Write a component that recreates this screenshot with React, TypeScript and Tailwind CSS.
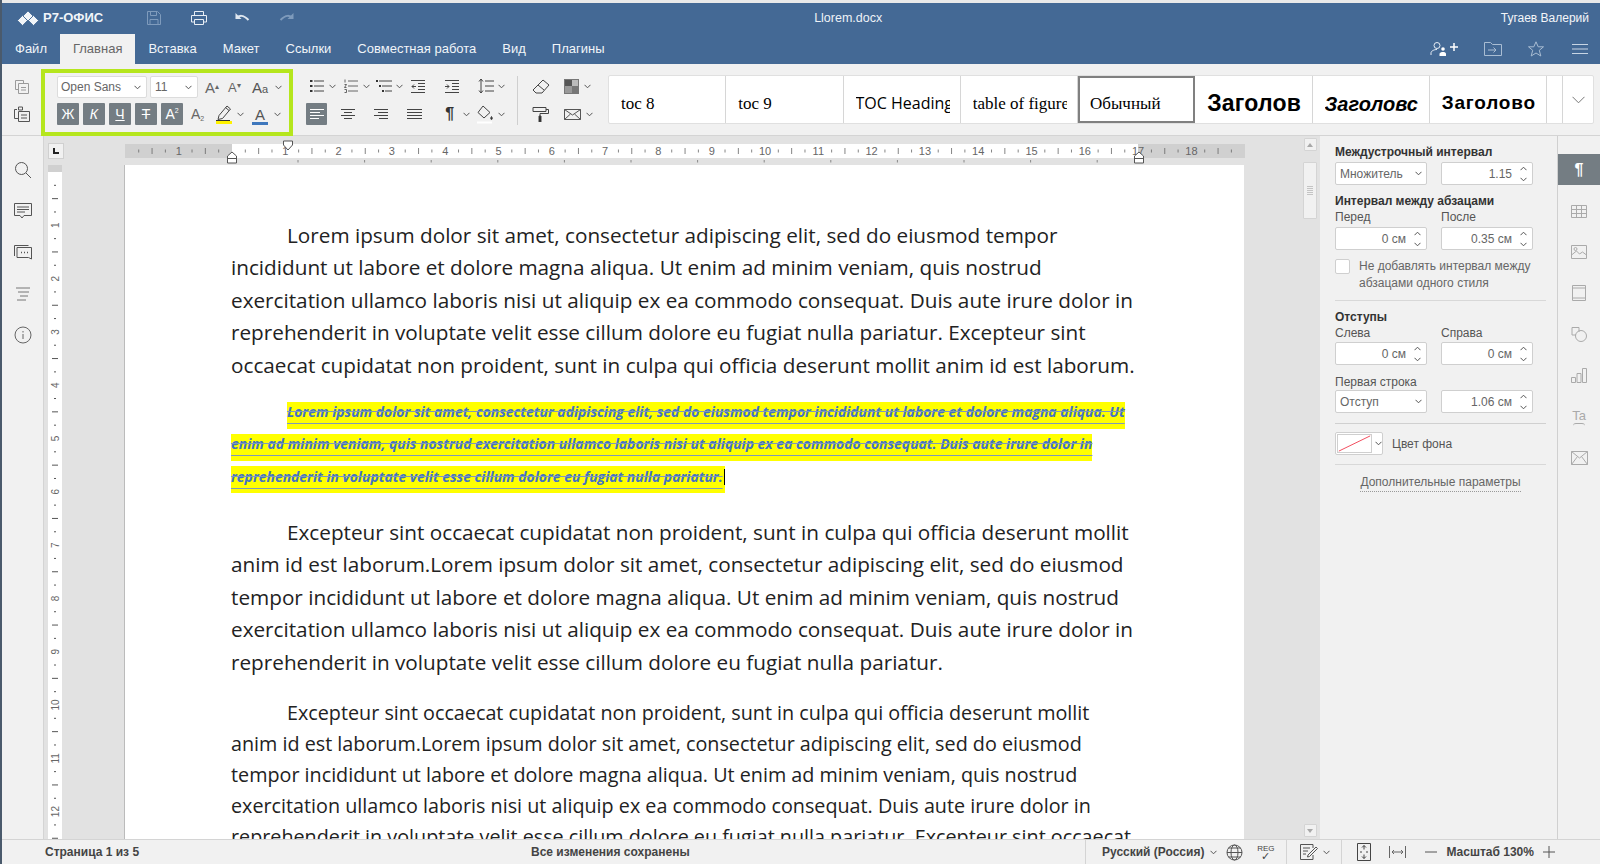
import type { ReactNode } from "react";

const sans = "font-['Liberation_Sans',Arial,sans-serif]";

function Chev({ className = "", color = "#555" }: { className?: string; color?: string }) {
  return (
    <svg width="7" height="5" viewBox="0 0 7 5" className={`shrink-0 ${className}`} fill="none" stroke={color} strokeWidth="1">
      <path d="M.5 .8 3.5 3.8 6.5 .8" />
    </svg>
  );
}

function Ico({ w = 16, h = 16, className = "", stroke = "#444", children }: { w?: number; h?: number; className?: string; stroke?: string; children: ReactNode }) {
  return (
    <svg width={w} height={h} viewBox={`0 0 ${w} ${h}`} className={`shrink-0 ${className}`} fill="none" stroke={stroke} strokeWidth="1">
      {children}
    </svg>
  );
}

function Hdr({ label, className = "" }: { label: string; className?: string }) {
  return <div className={`text-[12px] font-bold leading-[14px] text-[#333] ${className}`}>{label}</div>;
}

function Lbl({ label, className = "" }: { label: string; className?: string }) {
  return <div className={`text-[12px] leading-[14px] text-[#555] ${className}`}>{label}</div>;
}

function Select({ value }: { value: string }) {
  return (
    <div className="flex h-[23px] w-[92px] items-center justify-between rounded-[2px] border border-[#cfcfcf] bg-white pl-[4px] pr-[4px] text-[12px] text-[#666]">
      {value}
      <Chev />
    </div>
  );
}

function Spin({ value }: { value: string }) {
  return (
    <div className="flex h-[23px] w-[92px] items-center justify-end rounded-[2px] border border-[#cfcfcf] bg-white pr-[5px] text-[12px] text-[#666]">
      {value}
      <span className="ml-[8px] flex flex-col gap-[6px]">
        <Chev className="rotate-180" />
        <Chev />
      </span>
    </div>
  );
}

function Ruler() {
  const cm = 53.3;
  const zero = 107;
  const ticks: number[] = [];
  for (let i = -8; i < 80; i++) ticks.push(zero + i * (cm / 4));
  const nums = Array.from({ length: 18 }, (_, i) => i + 1);
  const tabs = Array.from({ length: 13 }, (_, i) => 173 + i * 66.6);
  return (
    <svg width="1120" height="22" viewBox="0 0 1120 22" className="shrink-0 overflow-visible">
      <rect x="0" y="0" width="1120" height="14" fill="#d0d0d0" />
      <rect x="107" y="0" width="906" height="14" fill="#fff" />
      {ticks.map((x, i) =>
        i % 4 === 0 || x < 4 || x > 1116 ? null : <line key={i} x1={x} x2={x} y1={i % 4 === 2 ? 4 : 5.5} y2={i % 4 === 2 ? 10 : 8.5} stroke="#666" strokeWidth=".8" />
      )}
      <text x={zero - cm} y="11" textAnchor="middle" fontSize="11" fill="#666" fontFamily="Liberation Sans">1</text>
      {nums.map((n) => (
        <text key={n} x={zero + n * cm} y="11" textAnchor="middle" fontSize="11" fill="#666" fontFamily="Liberation Sans">{n}</text>
      ))}
      {tabs.map((x) => (
        <line key={x} x1={x} x2={x} y1="16" y2="18.5" stroke="#888" />
      ))}
      <path d="M102.5 19V12l4.500-4 4.500 4v7zM102.5 14.500h9" fill="#fff" stroke="#555" />
      <path d="M158.5 -3h9v4l-4.500 5-4.500-5z" fill="#fff" stroke="#555" />
      <path d="M1009.5 19V12l4.500-4 4.500 4v7zM1009.5 14.500h9" fill="#fff" stroke="#555" />
    </svg>
  );
}

function VRuler() {
  const cm = 53.3;
  const rows = Array.from({ length: 52 }, (_, i) => 7 + i * (cm / 4));
  return (
    <svg width="14" height="674" viewBox="0 0 14 674" className="shrink-0">
      <rect width="14" height="674" fill="#fff" />
      <rect width="14" height="7" fill="#d0d0d0" />
      {rows.map((y, i) =>
        i === 0 || i % 4 === 0 ? null : <line key={i} y1={y} y2={y} x1={i % 4 === 2 ? 4 : 6} x2={i % 4 === 2 ? 10 : 8} stroke="#555" strokeWidth="1" />
      )}
      {Array.from({ length: 12 }, (_, i) => i + 1).map((n) => (
        <text key={n} x="0" y="0" transform={`translate(11 ${7 + n * cm}) rotate(-90)`} textAnchor="middle" fontSize="10" fill="#666" fontFamily="Liberation Sans">{n}</text>
      ))}
    </svg>
  );
}

const para1 = [
  "Lorem ipsum dolor sit amet, consectetur adipiscing elit, sed do eiusmod tempor",
  "incididunt ut labore et dolore magna aliqua. Ut enim ad minim veniam, quis nostrud",
  "exercitation ullamco laboris nisi ut aliquip ex ea commodo consequat. Duis aute irure dolor in",
  "reprehenderit in voluptate velit esse cillum dolore eu fugiat nulla pariatur. Excepteur sint",
  "occaecat cupidatat non proident, sunt in culpa qui officia deserunt mollit anim id est laborum.",
];
const para3 = [
  "Excepteur sint occaecat cupidatat non proident, sunt in culpa qui officia deserunt mollit",
  "anim id est laborum.Lorem ipsum dolor sit amet, consectetur adipiscing elit, sed do eiusmod",
  "tempor incididunt ut labore et dolore magna aliqua. Ut enim ad minim veniam, quis nostrud",
  "exercitation ullamco laboris nisi ut aliquip ex ea commodo consequat. Duis aute irure dolor in",
  "reprehenderit in voluptate velit esse cillum dolore eu fugiat nulla pariatur.",
];
const para4 = [
  "Excepteur sint occaecat cupidatat non proident, sunt in culpa qui officia deserunt mollit",
  "anim id est laborum.Lorem ipsum dolor sit amet, consectetur adipiscing elit, sed do eiusmod",
  "tempor incididunt ut labore et dolore magna aliqua. Ut enim ad minim veniam, quis nostrud",
  "exercitation ullamco laboris nisi ut aliquip ex ea commodo consequat. Duis aute irure dolor in",
  "reprehenderit in voluptate velit esse cillum dolore eu fugiat nulla pariatur. Excepteur sint occaecat",
];
const marked = [
  "Lorem ipsum dolor sit amet, consectetur adipiscing elit, sed do eiusmod tempor incididunt ut labore et dolore magna aliqua. Ut",
  "enim ad minim veniam, quis nostrud exercitation ullamco laboris nisi ut aliquip ex ea commodo consequat. Duis aute irure dolor in",
  "reprehenderit in voluptate velit esse cillum dolore eu fugiat nulla pariatur.",
];

function Para({ lines, className = "" }: { lines: string[]; className?: string }) {
  return (
    <div className={`text-[#222] ${className}`}>
      {lines.map((l, i) => (
        <div key={i} className={`whitespace-nowrap ${i === 0 ? "pl-[56px]" : ""}`}>{l}</div>
      ))}
    </div>
  );
}

function StyleCell({ children, selected }: { children: ReactNode; selected?: boolean }) {
  return (
    <div className={`flex h-full w-[117.25px] shrink-0 items-center whitespace-nowrap pt-[8px] text-black ${selected ? "border-2 border-[#808080] pl-[10px]" : "border-r border-[#d6d6d6] pl-[12px]"}`}>
      <div className="w-[94px] overflow-hidden">{children}</div>
    </div>
  );
}

const tabs = ["Файл", "Главная", "Вставка", "Макет", "Ссылки", "Совместная работа", "Вид", "Плагины"];

export default function App() {
  return (
    <div className={`flex h-[864px] w-[1600px] flex-col overflow-hidden border-l-2 border-[#4a5a6c] bg-[#f1f1f1] ${sans}`}>
      <div className="h-[3px] shrink-0 bg-[#e9e9e9]" />
      {/* шапка */}
      <header className="h-[61px] shrink-0 bg-[#446995] text-white">
        <div className="flex h-[30px] items-center">
          <svg width="22" height="15" viewBox="0 0 22 15" className="ml-[15px]" fill="#f2f5f8" stroke="#446995" strokeWidth=".8">
            <path d="M5.500 4.500 10.500 9.500 5.500 14.500 .5 9.500zM16.500 4.500 21.500 9.500 16.500 14.500 11.500 9.500zM11 0 16 5 11 10 6 5z" />
          </svg>
          <span className="ml-[4px] text-[13px] font-bold text-[#f1f5f9]">Р7-ОФИС</span>
          <Ico className="ml-[43px]" stroke="#7f9bbc">
            <path d="M1.500 1.500h10l3 3v10h-13zM4.500 1.500v4h6v-4M4 14.500v-5h8v5" />
          </Ico>
          <Ico w={18} className="ml-[28px]" stroke="#e8eef5">
            <path d="M4.500 5V1.500h9V5M4.500 12h-3V5.500h15V12h-3M4.500 9.500h9v5h-9z" />
          </Ico>
          <Ico className="ml-[26px]" stroke="#dfe7f0">
            <path d="M2.500 8.500C5 5 9 4.500 14.500 10" strokeWidth="2" />
            <path d="M1.500 3v6h6z" fill="#dfe7f0" stroke="none" />
          </Ico>
          <Ico className="ml-[29px]" stroke="#7f9bbc">
            <path d="M13.500 8.500C11 5 7 4.500 1.500 10" strokeWidth="2" />
            <path d="M14.500 3v6h-6z" fill="#7f9bbc" stroke="none" />
          </Ico>
          <span className="ml-[508px] w-[90px] text-center text-[12.5px] text-[#eef2f7]">Llorem.docx</span>
          <span className="ml-auto pr-[11px] text-[12px] text-[#f4f6f9]">Тугаев Валерий</span>
        </div>
        <div className="flex h-[31px] items-end">
          {tabs.map((t) => (
            <div key={t} className={`flex h-[30px] items-center px-[13px] text-[13px] ${t === "Главная" ? "bg-[#f1f1f1] text-[#666]" : "text-[#f1f5f9]"}`}>
              {t}
            </div>
          ))}
          <div className="ml-auto flex h-[31px] items-center pr-[12px]">
            <Ico w={28} h={16} stroke="#e6edf5">
              <circle cx="7" cy="4.500" r="3" />
              <path d="M1 14v-2c0-2 3-3.500 6-3.500" />
              <circle cx="13" cy="8" r="1.800" fill="#fff" stroke="none" />
              <path d="M9.500 15v-2c0-1.500 2-2 3.500-2s3 .5 3 2v2z" fill="#fff" stroke="none" />
              <path d="M20 6h8M24 2v8" stroke="#fff" strokeWidth="1.500" />
            </Ico>
            <Ico w={18} className="ml-[26px]" stroke="#a9bdd3">
              <path d="M.5 14.500V1.500h6l2 2h9v11zM4 9h8M9.500 6.500 12 9l-2.500 2.500" />
            </Ico>
            <Ico w={16} className="ml-[26px]" stroke="#a9bdd3">
              <path d="m8 .8 2.200 5h5.300l-4.200 3.500 1.500 5.700L8 12l-4.800 3 1.500-5.700L.5 5.800h5.300z" />
            </Ico>
            <Ico w={16} h={12} className="ml-[28px]" stroke="#c8d5e4">
              <path d="M0 1.500h16M0 6h16M0 10.500h16" />
            </Ico>
          </div>
        </div>
      </header>

      {/* панель инструментов */}
      <div className="relative z-10 flex h-[72px] shrink-0 items-start border-b border-[#d4d4d4] bg-[#f1f1f1]">
        <div className="flex w-[39px] shrink-0 flex-col items-center gap-[11px] pt-[15px]">
          <Ico stroke="#9a9a9a"><path d="M1.500 1.500h8v3M1.500 1.500v9h3M4.500 4.500h10v10h-10zM7 8.500h5M7 11h5" /></Ico>
          <Ico stroke="#555"><path d="M3 3.500H.5v9h4M4.500 1h4v3h-4zM4.500 5.500h11v10h-11zM7 9h6M7 12h6" /></Ico>
        </div>

        {/* группа шрифта */}
        <div className="mt-[5px] h-[67px] w-[252px] shrink-0 border-4 border-[#b5e61d] pl-[12px] pt-[3px]">
          <div className="flex h-[22px] items-center">
            <div className="flex h-[22px] w-[90px] items-center justify-between rounded-[2px] border border-[#dcdcdc] bg-white pl-[3px] pr-[5px] text-[12px] text-[#666]">
              Open Sans
              <Chev />
            </div>
            <div className="ml-[3px] flex h-[22px] w-[48px] items-center justify-between rounded-[2px] border border-[#dcdcdc] bg-white pl-[4px] pr-[5px] text-[12px] text-[#666]">
              11
              <Chev />
            </div>
            <span className="ml-[7px] w-[13px] whitespace-nowrap text-[15px] leading-none text-[#666]">A<sup className="text-[8px]">▴</sup></span>
            <span className="ml-[10px] w-[13px] whitespace-nowrap text-[13px] leading-none text-[#666]">A<sup className="text-[8px]">▾</sup></span>
            <span className="ml-[11px] w-[19px] whitespace-nowrap text-[15px] leading-none text-[#555]">A<span className="text-[11px]">a</span></span>
            <Chev className="ml-[4px]" />
          </div>
          <div className="mt-[5px] flex h-[22px] items-center">
            {["Ж", "К", "Ч", "Т", "A"].map((c, i) => (
              <div key={c} className={`flex h-[22px] w-[22px] items-center justify-center rounded-[1px] bg-[#747d83] text-[14px] text-white ${i === 0 ? "" : "ml-[4px]"} ${i === 1 ? "italic" : ""} ${i === 2 ? "underline" : ""} ${i === 3 ? "line-through" : ""}`}>
                {c}
                {i === 4 && <sup className="text-[7px]">2</sup>}
              </div>
            ))}
            <span className="ml-[8px] w-[16px] text-[14px] leading-none text-[#666]">A<sub className="text-[7px]">2</sub></span>
            <Ico w={16} h={20} className="ml-[9px]" stroke="#444">
              <path d="M3 11.500 11 2l3.500 3-8 9.500-4.500 1z" />
              <path d="M9.500 3.500 13 6.500" />
              <path d="M0 16.500h14" stroke="#333" />
              <path d="M0 18.500h16" stroke="#fff200" strokeWidth="3" />
            </Ico>
            <Chev className="ml-[5px]" />
            <span className="relative ml-[8px] w-[16px] text-center text-[15px] leading-none text-[#555]">
              A
              <span className="absolute -bottom-[3px] left-0 h-[3px] w-[16px] bg-[#3f78bd]" />
            </span>
            <Chev className="ml-[6px]" />
          </div>
        </div>

        {/* абзац */}
        <div className="ml-[13px] flex w-[199px] shrink-0 flex-col pt-[12px]">
          <div className="flex h-[20px] items-center">
            <Ico w={14} className="ml-[4px]"><path d="M4 3h10M4 8h10M4 13h10" /><path d="M0 2h2.500v2H0zM0 7h2.500v2H0zM0 12h2.500v2H0z" fill="#333" stroke="none" /></Ico>
            <Chev className="ml-[5px]" />
            <Ico w={14} className="ml-[8px]"><path d="M4 3h10M4 8h10M4 13h10M1 1.500v3M.500 6.500h2l-2 3h2M.500 11.500h2v3h-2" strokeWidth=".8" /></Ico>
            <Chev className="ml-[5px]" />
            <Ico w={16} className="ml-[6px]"><path d="M3 3h13M6 8h10M9 13h7" /><path d="M0 2h2v2H0zM3 7h2v2H3zM6 12h2v2H6z" fill="#333" stroke="none" /></Ico>
            <Chev className="ml-[4px]" />
            <Ico w={14} className="ml-[8px]"><path d="M0 2.500h14M7 5.500h7M7 8.500h7M7 11.500h7M0 14.500h14M5 8.500H1M3 6.500l-2 2 2 2" /></Ico>
            <Ico w={14} className="ml-[20px]"><path d="M0 2.500h14M7 5.500h7M7 8.500h7M7 11.500h7M0 14.500h14M0 8.500h4M2 6.500l2 2-2 2" /></Ico>
            <Ico w={16} className="ml-[19px]"><path d="M7 3h9M7 8h9M7 13h9M3 1v14M1 3.500 3 1l2 2.500M1 12.500 3 15l2-2.500" /></Ico>
            <Chev className="ml-[4px]" />
          </div>
          <div className="mt-[7px] flex h-[22px] items-center">
            <div className="flex h-[22px] w-[22px] items-center justify-center rounded-[1px] bg-[#747d83]">
              <Ico w={14} h={12} stroke="#fff"><path d="M0 1.500h14M0 4.500h10M0 7.500h14M0 10.500h9" /></Ico>
            </div>
            <Ico w={14} h={12} className="ml-[14px]"><path d="M0 1.500h14M3 4.500h8M0 7.500h14M3 10.500h8" /></Ico>
            <Ico w={14} h={12} className="ml-[19px]"><path d="M0 1.500h14M4 4.500h10M0 7.500h14M5 10.500h9" /></Ico>
            <Ico w={15} h={12} className="ml-[19px]"><path d="M0 1.500h15M0 4.500h15M0 7.500h15M0 10.500h15" /></Ico>
            <span className="ml-[23px] w-[11px] text-[16px] font-bold leading-none text-[#333]">¶</span>
            <Chev className="ml-[7px]" />
            <Ico w={16} h={19} className="ml-[7px]">
              <path d="m6 1 7 6.500L7 13 1 7.500z" />
              <path d="M14.500 11.500c1 1 1 3 0 3s-1-2 0-3z" fill="#333" />
              <path d="M0 17.500h15" stroke="#fff" strokeWidth="2" />
            </Ico>
            <Chev className="ml-[5px]" />
          </div>
        </div>

        <div className="ml-[12px] mt-[12px] h-[49px] w-px shrink-0 bg-[#cfcfcf]" />

        <div className="ml-[14px] flex w-[72px] shrink-0 flex-col pt-[12px]">
          <div className="flex h-[20px] items-center">
            <Ico w={18}><path d="M11 2 17 7l-7 8H4l-3-3zM6 7l6 5" /></Ico>
            <span className="ml-[14px] grid h-[15px] w-[15px] grid-cols-2 grid-rows-2 border border-[#777]">
              <span className="bg-[#555]" /><span className="bg-[#bbb]" /><span className="bg-[#999]" /><span className="bg-[#777]" />
            </span>
            <Chev className="ml-[5px]" />
          </div>
          <div className="mt-[7px] flex h-[22px] items-center">
            <Ico w={18}><path d="M1 1.500h13v4H1zM14 3.500h2.500v4H8v3" /><path d="M7 10h2v6H7z" fill="#222" /></Ico>
            <Ico w={17} className="ml-[14px]" stroke="#555"><path d="M.5 3.500h16v10H.500zM.500 3.500l8 5.500 8-5.500M.500 13.500l6-5.500M16.500 13.500l-6-5.500" /></Ico>
            <Chev className="ml-[5px]" />
          </div>
        </div>

        {/* стили */}
        <div className="ml-[4px] mt-[11px] flex h-[49px] w-[986px] shrink-0 rounded-[2px] border border-[#e0e0e0] bg-white">
          <StyleCell><span className="font-['Liberation_Serif',serif] text-[17px]">toc 8</span></StyleCell>
          <StyleCell><span className="font-['Liberation_Serif',serif] text-[17px]">toc 9</span></StyleCell>
          <StyleCell><span className="font-['Open_Sans',sans-serif] text-[16px]">TOC Heading</span></StyleCell>
          <StyleCell><span className="font-['Liberation_Serif',serif] text-[17px]">table of figure</span></StyleCell>
          <StyleCell selected><span className="font-['Liberation_Serif',serif] text-[17px]">Обычный</span></StyleCell>
          <StyleCell><span className="text-[23px] font-bold tracking-[.2px]">Заголов</span></StyleCell>
          <StyleCell><span className="text-[20px] font-bold italic">Заголовс</span></StyleCell>
          <StyleCell><span className="text-[19px] font-bold tracking-[.8px]">Заголово</span></StyleCell>
          <div className="w-[16px] shrink-0 border-r border-[#d6d6d6]" />
          <div className="flex flex-1 items-center justify-center">
            <svg width="13" height="8" viewBox="0 0 13 8" fill="none" stroke="#777"><path d="M.5 .8 6.500 6.800 12.500 .8" /></svg>
          </div>
        </div>
      </div>

      {/* рабочая область */}
      <div className="flex min-h-0 flex-1">
        <aside className="flex w-[42px] shrink-0 flex-col items-center border-r border-[#d4d4d4] pt-[25px]">
          <Ico w={18} h={18} stroke="#555"><circle cx="7.500" cy="7.500" r="6" /><path d="m12 12 5 5" /></Ico>
          <Ico w={18} h={18} className="mt-[23px]" stroke="#555"><path d="M.5 1.500h17v12H10l-2 2.500-2-2.500H.5zM3 5h12M3 7.500h12M3 10h8" /></Ico>
          <Ico w={18} h={18} className="mt-[24px]" stroke="#555"><path d="M.5 12V1.500h14M3 3.500h14.500v11.500l-3-1.500H3z" /><path d="M7 8.500h1M10 8.500h1M13 8.500h1" strokeWidth="1.500" /></Ico>
          <Ico w={16} h={16} className="mt-[24px]" stroke="#777"><path d="M1 2h14M3 6h11M5 10h8M2 14h9" /></Ico>
          <Ico w={18} h={18} className="mt-[24px]" stroke="#666"><circle cx="9" cy="9" r="8" /><path d="M9 8v5M9 5v1.500" /></Ico>
        </aside>

        <main className="flex min-w-0 flex-1 flex-col overflow-hidden bg-[#e2e2e2]">
          <div className="flex h-[29px] shrink-0 items-start pt-[7px]">
            <div className="ml-[4px] flex h-[16px] w-[16px] items-center justify-center border border-[#d0d0d0] bg-[#f1f1f1]">
              <span className="h-[6px] w-[6px] border-b-2 border-l-2 border-[#222]" />
            </div>
            <div className="ml-[61px] mt-px">
              <Ruler />
            </div>
          </div>
          <div className="flex min-h-0 flex-1">
            <div className="ml-[4px] shrink-0">
              <VRuler />
            </div>
            <div className="ml-[62px] h-full w-[1120px] shrink-0 overflow-hidden border-l border-[#bbb] bg-white pl-[106px] pt-[54px] font-['Open_Sans',sans-serif]">
              <Para lines={para1} className="text-[20.72px] leading-[32.4px]" />
              <div className="mt-[21px] text-[13.93px] font-bold italic text-[#4472c4]">
                {marked.map((l, i) => (
                  <div key={i} className={`h-[32px] whitespace-nowrap ${i === 0 ? "pl-[56px]" : ""}`}>
                    <span className="inline-block h-[27px] bg-[#ffff00] leading-[19px] underline decoration-[#7f9ab8] underline-offset-[6px]">
                      <span className="line-through decoration-[#7f9ab8]">{l}</span>
                      {i === 2 && <span className="ml-px inline-block h-[16px] w-px translate-y-[3px] bg-black" />}
                    </span>
                  </div>
                ))}
              </div>
              <Para lines={para3} className="mt-[18px] text-[20.72px] leading-[32.4px]" />
              <Para lines={para4} className="mt-[19px] text-[19.75px] leading-[31px]" />
            </div>
          </div>
        </main>

        {/* правая панель */}
        <div className="flex w-[20px] shrink-0 flex-col items-center justify-between bg-[#e2e2e2] pb-[2px] pt-[2px]">
          <div className="flex flex-col items-center">
            <div className="flex h-[13px] w-[13px] items-center justify-center rounded-[1px] border border-[#d4d4d4] bg-[#f1f1f1]">
              <span className="h-0 w-0 border-x-[3px] border-b-[4px] border-x-transparent border-b-[#a8a8a8]" />
            </div>
            <div className="mt-[11px] flex h-[57px] w-[14px] items-center justify-center rounded-[1px] border border-[#d4d4d4] bg-[#f1f1f1]">
              <span className="flex flex-col gap-px">
                {[0, 1, 2, 3, 4].map((i) => <span key={i} className="block h-px w-[6px] bg-[#c4c4c4]" />)}
              </span>
            </div>
          </div>
          <div className="flex h-[13px] w-[13px] items-center justify-center rounded-[1px] border border-[#d4d4d4] bg-[#f1f1f1]">
            <span className="h-0 w-0 border-x-[3px] border-t-[4px] border-x-transparent border-t-[#a8a8a8]" />
          </div>
        </div>

        <section className="w-[237px] shrink-0 pl-[15px] pr-[14px] pt-[9px]">
          <Hdr label="Междустрочный интервал" />
          <div className="mt-[3px] flex gap-[14px]"><Select value="Множитель" /><Spin value="1.15" /></div>
          <Hdr label="Интервал между абзацами" className="mt-[9px]" />
          <div className="mt-[2px] flex gap-[14px]"><Lbl label="Перед" className="w-[92px]" /><Lbl label="После" /></div>
          <div className="mt-[3px] flex gap-[14px]"><Spin value="0 см" /><Spin value="0.35 см" /></div>
          <div className="mt-[9px] flex">
            <span className="h-[15px] w-[15px] shrink-0 rounded-[2px] border border-[#cfcfcf] bg-white" />
            <div className="-mt-[1px] ml-[9px] text-[12px] leading-[16.5px] text-[#666]">
              Не добавлять интервал между<br />абзацами одного стиля
            </div>
          </div>
          <div className="mt-[9px] h-px w-[211px] bg-[#d8d8d8]" />
          <Hdr label="Отступы" className="mt-[9px]" />
          <div className="mt-[2px] flex gap-[14px]"><Lbl label="Слева" className="w-[92px]" /><Lbl label="Справа" /></div>
          <div className="mt-[2px] flex gap-[14px]"><Spin value="0 см" /><Spin value="0 см" /></div>
          <Lbl label="Первая строка" className="mt-[10px]" />
          <div className="mt-[1px] flex gap-[14px]"><Select value="Отступ" /><Spin value="1.06 см" /></div>
          <div className="mt-[10px] h-px w-[211px] bg-[#d0d0d0]" />
          <div className="mt-[8px] flex items-center">
            <div className="flex h-[23px] w-[48px] items-center rounded-[2px] border border-[#cfcfcf] bg-white pl-[1px]">
              <svg width="35" height="19" viewBox="0 0 35 19" className="border border-[#cfcfcf]" fill="none" stroke="#f03a4d">
                <path d="M0 18 35 1" />
              </svg>
              <Chev className="ml-[3px]" />
            </div>
            <Lbl label="Цвет фона" className="ml-[9px]" />
          </div>
          <div className="mt-[9px] h-px w-[211px] bg-[#d8d8d8]" />
          <div className="mt-[9px] w-[211px] text-center leading-[14px]">
            <span className="border-b border-dotted border-[#999] pb-[2px] text-[12px] text-[#666]">Дополнительные параметры</span>
          </div>
        </section>

        <nav className="flex w-[43px] shrink-0 flex-col items-center border-l border-[#d0d0d0] pt-[18px]">
          <div className="flex h-[31px] w-full items-center justify-center bg-[#747d83] text-[16px] font-bold text-white">¶</div>
          <Ico w={16} h={13} className="mt-[20px]" stroke="#aaa"><path d="M.5 .5h15v12H.500zM.500 4.500h15M.500 8.500h15M5.500 .5v12M10.500 .5v12" /></Ico>
          <Ico w={16} h={16} className="mt-[26px]" stroke="#aaa"><path d="M.5 1.500h15v13H.500zM.500 11l5-4 3 3 3-2 4 3" /><circle cx="4.500" cy="5" r="1.500" /></Ico>
          <Ico w={14} h={16} className="mt-[25px]" stroke="#aaa"><path d="M.5 .5h13v15H.500zM.500 3h13M.500 13h13" /></Ico>
          <Ico w={16} h={16} className="mt-[25px]" stroke="#aaa"><path d="M8 6V1.500H1V9h4" /><circle cx="10" cy="10" r="5.500" /></Ico>
          <Ico w={16} h={16} className="mt-[25px]" stroke="#aaa"><path d="M.5 10.500h4v5h-4zM6 6.500h4v9H6zM11.500 1.500h4v14h-4z" /></Ico>
          <div className="mt-[26px] flex h-[18px] flex-col items-center text-[13px] leading-[14px] text-[#aaa]">Ta<span className="h-[3px] w-[12px] rounded-t-full border-t border-[#aaa]" /></div>
          <Ico w={17} h={14} className="mt-[24px]" stroke="#aaa"><path d="M.5 .5h16v13H.500zM.500 .5l8 6.500 8-6.500M.500 13.500l6-8M16.500 13.500l-6-8" /></Ico>
        </nav>
      </div>

      {/* статусная строка */}
      <footer className="flex h-[25px] shrink-0 items-center border-t border-[#d4d4d4] bg-[#f1f1f1] text-[12px] font-bold text-[#444]">
        <span className="ml-[43px] w-[486px]">Страница 1 из 5</span>
        <span className="w-[554px]">Все изменения сохранены</span>
        <div className="flex h-full items-center border-l border-[#d4d4d4] pl-[16px]">
          Русский (Россия)
          <Chev className="ml-[6px]" />
          <Ico w={17} h={17} className="ml-[9px]" stroke="#555"><circle cx="8.500" cy="8.500" r="7.500" /><ellipse cx="8.500" cy="8.500" rx="3.500" ry="7.500" /><path d="M1 8.500h15M2.500 4h12M2.500 13h12" /></Ico>
          <span className="ml-[13px] flex w-[19px] flex-col items-center text-[8px] font-normal leading-[7px]">REG<span className="text-[11px] leading-[8px]">✓</span></span>
        </div>
        <div className="ml-[11px] flex h-full items-center border-l border-[#d4d4d4] pl-[13px]">
          <Ico w={18} h={18} stroke="#555"><path d="M13 5V1.500H.5v15H13V12M3 5h7M3 8h5M3 11h3M8 12l8-8 1.500 1.500-8 8-2 .5z" /></Ico>
          <Chev className="ml-[5px]" />
        </div>
        <div className="ml-[11px] flex h-full items-center border-l border-[#d4d4d4] pl-[15px]">
          <Ico w={14} h={18} stroke="#444"><path d="M.5 .5h13v17H.500zM7 2.500v4M5 4.500l2-2 2 2M7 11.500v4M5 13.500l2 2 2-2M3 9h2M9 9h2" /></Ico>
          <Ico w={17} h={12} className="ml-[18px]" stroke="#666"><path d="M.5 0v12M16.500 0v12M3 6h11M5 4 3 6l2 2M12 4l2 2-2 2" /></Ico>
          <Ico w={12} h={12} className="ml-[19px]" stroke="#555"><path d="M0 6h12" /></Ico>
          <span className="ml-[9px] whitespace-nowrap">Масштаб 130%</span>
          <Ico w={12} h={12} className="ml-[9px]" stroke="#555"><path d="M0 6h12M6 0v12" /></Ico>
        </div>
      </footer>
    </div>
  );
}
